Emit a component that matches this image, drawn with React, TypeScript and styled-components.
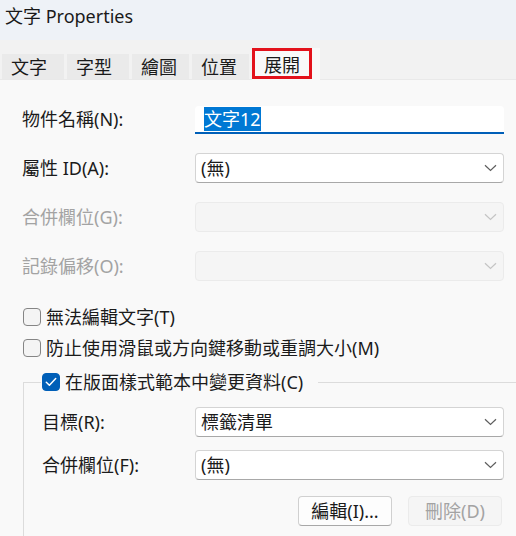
import React from "react";
import styled, { createGlobalStyle } from "styled-components";

const FONT = `"Noto Sans", "Noto Sans CJK TC", sans-serif`;

const GlobalStyle = createGlobalStyle`
  html, body {
    margin: 0;
    padding: 0;
    background: #f9f9f9;
  }
  body {
    font-family: ${FONT};
    color: #1b1b1b;
  }
`;

const tabs = [
  { label: "文字", width: 62 },
  { label: "字型", width: 62 },
  { label: "繪圖", width: 57 },
  { label: "位置", width: 57 },
  { label: "展開", width: 68, active: true },
];

const Chevron = ({ disabled }: { disabled?: boolean }) => (
  <svg width="13" height="8" viewBox="0 0 13 8">
    <path
      d="M1 1.2 L6.5 6.5 L12 1.2"
      fill="none"
      stroke={disabled ? "#c4c4c4" : "#5e5e5e"}
      strokeWidth="1.2"
    />
  </svg>
);

const Check = () => (
  <svg width="12" height="10" viewBox="0 0 12 10">
    <path
      d="M1.3 5.2 L4.4 8.2 L10.7 1.6"
      fill="none"
      stroke="#ffffff"
      strokeWidth="1.5"
      strokeLinecap="round"
      strokeLinejoin="round"
    />
  </svg>
);

const Select = ({ value, disabled }: { value?: string; disabled?: boolean }) => (
  <S.Select $disabled={disabled}>
    <span>{value}</span>
    <Chevron disabled={disabled} />
  </S.Select>
);

const CheckRow = ({ label, checked }: { label: string; checked?: boolean }) => (
  <S.CheckRow>
    <S.Box $checked={checked}>{checked && <Check />}</S.Box>
    <span>{label}</span>
  </S.CheckRow>
);

export default function App() {
  return (
    <S.Window>
      <GlobalStyle />
      <S.TitleBar>文字 Properties</S.TitleBar>
      <S.TabStrip>
        {tabs.map((t) => (
          <S.Tab key={t.label} $active={t.active} style={{ width: t.width }}>
            {t.active ? <S.Marked>{t.label}</S.Marked> : t.label}
          </S.Tab>
        ))}
      </S.TabStrip>
      <S.Panel>
        <S.FieldGrid $labelWidth={173} $indent={22}>
          <S.Label>物件名稱(N):</S.Label>
          <S.TextInput>
            <S.Selected>文字12</S.Selected>
          </S.TextInput>
          <S.Label>屬性 ID(A):</S.Label>
          <Select value="(無)" />
          <S.Label $disabled>合併欄位(G):</S.Label>
          <Select disabled />
          <S.Label $disabled>記錄偏移(O):</S.Label>
          <Select disabled />
        </S.FieldGrid>

        <S.CheckList>
          <CheckRow label="無法編輯文字(T)" />
          <CheckRow label="防止使用滑鼠或方向鍵移動或重調大小(M)" />
        </S.CheckList>

        <S.GroupBox>
          <S.GroupHeader>
            <CheckRow checked label="在版面樣式範本中變更資料(C)" />
          </S.GroupHeader>
          <S.GroupBody>
            <S.FieldGrid $labelWidth={153} $gap={13}>
              <S.Label>目標(R):</S.Label>
              <Select value="標籤清單" />
              <S.Label>合併欄位(F):</S.Label>
              <Select value="(無)" />
            </S.FieldGrid>
            <S.ButtonRow>
              <S.Button>編輯(I)...</S.Button>
              <S.Button $disabled>刪除(D)</S.Button>
            </S.ButtonRow>
          </S.GroupBody>
        </S.GroupBox>
      </S.Panel>
    </S.Window>
  );
}

const S = {
  Window: styled.div`
    width: 516px;
    height: 536px;
    overflow: hidden;
    display: flex;
    flex-direction: column;
    background: #f9f9f9;
    font-size: 18px;
    & > * {
      flex-shrink: 0;
    }
  `,
  TitleBar: styled.div`
    height: 40px;
    box-sizing: border-box;
    padding: 4px 0 0 5px;
    line-height: 24px;
    background: #eef2f7;
    color: #1a1a1a;
  `,
  TabStrip: styled.div`
    height: 40px;
    box-sizing: border-box;
    display: flex;
    align-items: flex-end;
    gap: 3px;
    padding-left: 2px;
    background: #f2f2f2;
    border-bottom: 1px solid #e9e9e9;
  `,
  Tab: styled.div<{ $active?: boolean }>`
    box-sizing: border-box;
    height: ${(p) => (p.$active ? "32px" : "25px")};
    padding-left: ${(p) => (p.$active ? "0" : "9px")};
    display: flex;
    align-items: ${(p) => (p.$active ? "flex-start" : "center")};
    background: ${(p) => (p.$active ? "#f9f9f9" : "#eaeaea")};
    line-height: 24px;
    color: #1a1a1a;
    margin-bottom: ${(p) => (p.$active ? "-1px" : "0")};
  `,
  Marked: styled.span`
    box-sizing: border-box;
    width: 60px;
    height: 31px;
    padding: 2px 0 0 9px;
    border: 3px solid #e3121b;
  `,
  Panel: styled.div`
    flex: 1;
    display: flex;
    flex-direction: column;
    padding-top: 24px;
  `,
  FieldGrid: styled.div<{ $labelWidth: number; $gap?: number; $indent?: number }>`
    display: grid;
    grid-template-columns: ${(p) => p.$labelWidth}px 309px;
    grid-auto-rows: 30px;
    row-gap: ${(p) => p.$gap ?? 19}px;
    align-items: center;
    padding-left: ${(p) => p.$indent ?? 0}px;
  `,
  Label: styled.div<{ $disabled?: boolean }>`
    line-height: 24px;
    color: ${(p) => (p.$disabled ? "#a3a3a3" : "#1b1b1b")};
  `,
  TextInput: styled.div`
    box-sizing: border-box;
    height: 28px;
    align-self: end;
    padding: 2px 0 0 9px;
    background: #ffffff;
    border-bottom: 2px solid #005fb8;
    border-radius: 4px 4px 0 0;
    line-height: 22px;
  `,
  Selected: styled.span`
    background: #0078d4;
    color: #ffffff;
  `,
  Select: styled.div<{ $disabled?: boolean }>`
    box-sizing: border-box;
    height: 30px;
    display: flex;
    align-items: center;
    justify-content: space-between;
    padding: 0 6px 0 5px;
    border-radius: 4px;
    line-height: 24px;
    background: ${(p) => (p.$disabled ? "#f5f5f5" : "#ffffff")};
    border: 1px solid ${(p) => (p.$disabled ? "#ebebeb" : "#d4d4d4")};
    border-bottom-color: ${(p) => (p.$disabled ? "#ebebeb" : "#a8a8a8")};
  `,
  CheckList: styled.div`
    display: flex;
    flex-direction: column;
    gap: 7px;
    margin-top: 24px;
    padding-left: 23px;
  `,
  CheckRow: styled.div`
    height: 24px;
    display: flex;
    align-items: center;
    gap: 5px;
    line-height: 24px;
  `,
  Box: styled.div<{ $checked?: boolean }>`
    box-sizing: border-box;
    width: 18px;
    height: 18px;
    border-radius: 4px;
    display: flex;
    align-items: center;
    justify-content: center;
    background: ${(p) => (p.$checked ? "#005fb8" : "#f4f4f4")};
    border: 1px solid ${(p) => (p.$checked ? "#005fb8" : "#858585")};
  `,
  GroupBox: styled.div`
    margin: 22px 0 0 23px;
    flex: 1;
    border-top: 1px solid #dcdcdc;
    border-left: 1px solid #dcdcdc;
  `,
  GroupHeader: styled.div`
    display: flex;
    width: fit-content;
    margin: -13px 0 0 17px;
    padding: 0 15px 0 1px;
    background: #f9f9f9;
  `,
  GroupBody: styled.div`
    padding: 13px 0 0 18px;
  `,
  ButtonRow: styled.div`
    width: 460px;
    display: flex;
    justify-content: flex-end;
    gap: 16px;
    margin-top: 16px;
  `,
  Button: styled.div<{ $disabled?: boolean }>`
    box-sizing: border-box;
    width: 94px;
    height: 30px;
    display: flex;
    align-items: center;
    justify-content: center;
    border-radius: 4px;
    line-height: 24px;
    background: ${(p) => (p.$disabled ? "#f5f5f5" : "#fdfdfd")};
    color: ${(p) => (p.$disabled ? "#a3a3a3" : "#1b1b1b")};
    border: 1px solid ${(p) => (p.$disabled ? "#ebebeb" : "#d0d0d0")};
    border-bottom-color: ${(p) => (p.$disabled ? "#ebebeb" : "#a8a8a8")};
  `,
};
